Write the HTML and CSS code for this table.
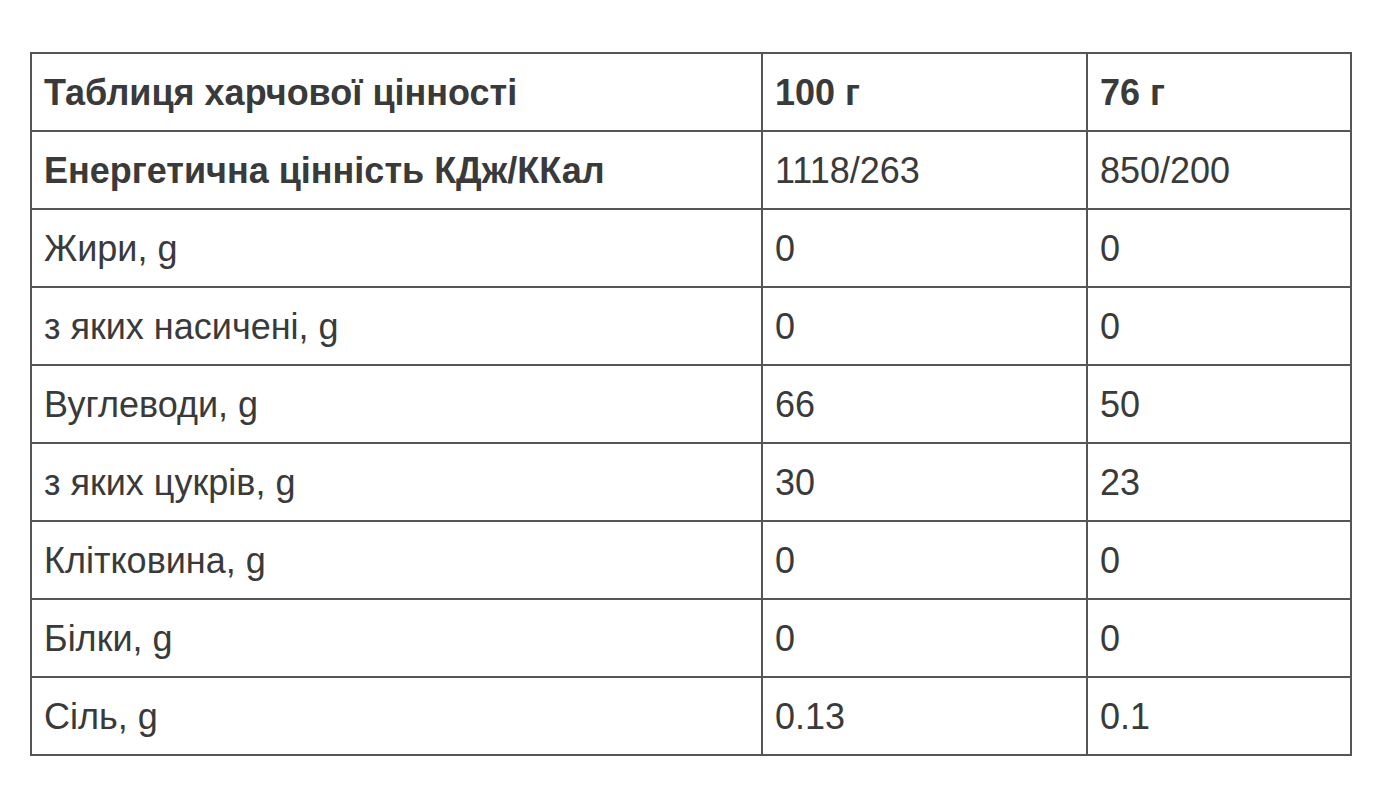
FILE: index.html
```html
<!DOCTYPE html>
<html lang="uk">
<head>
<meta charset="utf-8">
<title>Таблиця харчової цінності</title>
<link rel="stylesheet" href="styles.css">
</head>
<body>
<table class="nutrition">
  <colgroup>
    <col class="c1">
    <col class="c2">
    <col class="c3">
  </colgroup>
  <tbody>
    <tr class="head"><td>Таблиця харчової цінності</td><td>100 г</td><td>76 г</td></tr>
    <tr><td class="strong">Енергетична цінність КДж/ККал</td><td>1118/263</td><td>850/200</td></tr>
    <tr><td>Жири, g</td><td>0</td><td>0</td></tr>
    <tr><td>з яких насичені, g</td><td>0</td><td>0</td></tr>
    <tr><td>Вуглеводи, g</td><td>66</td><td>50</td></tr>
    <tr><td>з яких цукрів, g</td><td>30</td><td>23</td></tr>
    <tr><td>Клітковина, g</td><td>0</td><td>0</td></tr>
    <tr><td>Білки, g</td><td>0</td><td>0</td></tr>
    <tr><td>Сіль, g</td><td>0.13</td><td>0.1</td></tr>
  </tbody>
</table>
</body>
</html>
```
FILE: styles.css
```css
html, body {
  margin: 0;
  padding: 0;
  background: #ffffff;
}
body {
  padding: 52px 0 0 30px;
  font-family: "Liberation Sans", Arial, sans-serif;
  color: #3a3a3a;
}
.nutrition {
  border-collapse: collapse;
  table-layout: fixed;
  width: 1320px;
}
.c1 { width: 731px; }
.c2 { width: 325px; }
.c3 { width: 264px; }
.nutrition td {
  border: 2px solid #555555;
  padding: 19px 12px 17px;
  font-size: 36px;
  line-height: 40px;
  text-align: left;
  vertical-align: middle;
  white-space: nowrap;
}
.head td,
.nutrition td.strong {
  font-weight: bold;
}
```
